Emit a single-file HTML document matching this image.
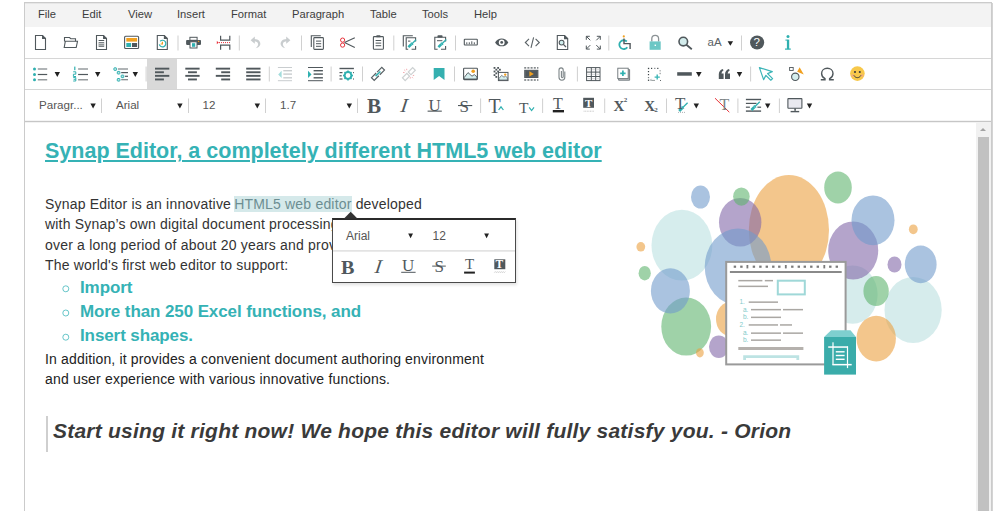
<!DOCTYPE html>
<html><head><meta charset="utf-8">
<style>
html,body{margin:0;padding:0;background:#fff;width:1000px;height:511px;overflow:hidden;}
body{position:relative;font-family:"Liberation Sans",sans-serif;color:#333;}
.abs{position:absolute;}
#frame{position:absolute;left:24px;top:2px;width:966px;height:520px;border:1px solid #cbcbcb;}
#menubar{position:absolute;left:25px;top:3px;width:966px;height:24px;background:#f3f3f3;}
.hl{position:absolute;left:25px;width:966px;height:1px;background:#d6d6d6;}
.mi{position:absolute;top:8.3px;font-size:11.2px;color:#3d3d3d;white-space:nowrap;}
.dd{position:absolute;font-size:11.6px;color:#555;white-space:nowrap;}
.txt{position:absolute;white-space:nowrap;}
</style></head>
<body>
<div id="frame"></div>
<div id="menubar"></div>
<div class="abs" style="left:992px;top:3px;width:1px;height:508px;background:#d4d4d4"></div>
<div class="abs" style="left:25px;top:3px;width:966px;height:1px;background:#e6e6e6"></div>
<div class="hl" style="top:58px"></div>
<div class="hl" style="top:89px"></div>
<div class="hl" style="top:121px;background:#c6c6c6"></div><div class="hl" style="top:120px;background:#f4f4f4"></div><div class="hl" style="top:122px;background:#f2f2f2;width:951px"></div>

<!-- menu -->
<div class="mi" style="left:38px">File</div>
<div class="mi" style="left:82px">Edit</div>
<div class="mi" style="left:128px">View</div>
<div class="mi" style="left:177px">Insert</div>
<div class="mi" style="left:231px">Format</div>
<div class="mi" style="left:292px">Paragraph</div>
<div class="mi" style="left:370px">Table</div>
<div class="mi" style="left:422px">Tools</div>
<div class="mi" style="left:474px">Help</div>

<svg class="abs" style="left:0;top:0" width="1000" height="122" viewBox="0 0 1000 122">
<g fill="none" stroke="#50585c" stroke-width="1.1">
 <!-- new doc -->
 <path d="M35.5 35.5H42.6L45.5 38.4V49.5H35.5Z"/>
 <path d="M42.6 35.5V38.4H45.5" fill="#50585c"/>
 <!-- folder -->
 <path d="M64.5 41.5V37.5H69.5L70.8 38.7H75.5V41.3"/>
 <path d="M64.2 47.5L65.3 41.3H77.5L76.2 47.5Z"/>
 <!-- doc lines -->
 <path d="M96.5 35.5H103.6L106.5 38.4V49.5H96.5Z"/>
 <path d="M103.6 35.5V38.4H106.5" fill="#50585c"/>
</g>
<g fill="#50585c">
 <rect x="98.6" y="40" width="5.6" height="1"/>
 <rect x="98.6" y="42" width="5.6" height="5" fill="#7a8083"/>
 <rect x="98.6" y="43.2" width="5.6" height="0.6" fill="#fff"/>
 <rect x="98.6" y="44.8" width="5.6" height="0.6" fill="#fff"/>
</g>
<!-- template -->
<rect x="124.6" y="36.3" width="14" height="12.2" rx="1" fill="#fff" stroke="#50585c" stroke-width="1.1"/>
<rect x="126.3" y="38" width="10.8" height="3.6" fill="#f1a01f"/>
<rect x="126.3" y="43" width="4.8" height="4" fill="#2fb0b0"/>
<rect x="132" y="43" width="5.1" height="4" fill="#50585c"/>
<!-- doc clock -->
<g fill="none" stroke="#50585c" stroke-width="1.1">
 <path d="M157.3 35.5H164.4L167.3 38.4V49.5H157.3Z"/>
 <path d="M164.4 35.5V38.4H167.3" fill="#50585c"/>
</g>
<path d="M160.2 41.2A3.3 3.3 0 1 1 159.3 44.3" fill="none" stroke="#2fb0b0" stroke-width="1.2"/>
<path d="M162.4 41.8V44H160.6" fill="none" stroke="#f1a01f" stroke-width="1.2"/>
<!-- separators -->
<g fill="#d0d0d0">
 <rect x="177.5" y="35.5" width="1" height="15"/>
 <rect x="238.8" y="35.5" width="1" height="15"/>
 <rect x="301" y="35.5" width="1" height="15"/>
 <rect x="393.3" y="35.5" width="1" height="15"/>
 <rect x="455" y="35.5" width="1" height="15"/>
 <rect x="608.3" y="35.5" width="1" height="15"/>
 <rect x="741" y="35.5" width="1" height="15"/>
</g>
<!-- printer -->
<rect x="189.9" y="37.3" width="7.2" height="3" fill="#fff" stroke="#50585c" stroke-width="1"/>
<rect x="186.1" y="40.1" width="14.9" height="4.8" rx="0.8" fill="#50585c"/>
<rect x="190" y="41.8" width="7" height="6.2" fill="#fff" stroke="#50585c" stroke-width="1"/>
<rect x="192" y="43.2" width="3.2" height="3.6" fill="#2fb0b0"/>
<circle cx="198.6" cy="41.4" r="0.7" fill="#f1a01f"/>
<!-- page break -->
<path d="M220.6 35.7V40.2H229.8V35.7" fill="none" stroke="#50585c" stroke-width="1.2"/>
<path d="M220.6 49.8V45.1H229.8V49.8" fill="none" stroke="#50585c" stroke-width="1.2"/>
<path d="M216.8 41L218.8 42.6L216.8 44.2Z" fill="#e8303a"/>
<path d="M219 42.6H230.3" stroke="#e8303a" stroke-width="1" stroke-dasharray="1 1"/>
<!-- undo redo -->
<path d="M254 39C258.6 38.8 260.8 41.8 260.3 44.6C259.9 46.6 258 47.9 255.6 48.2C257.4 46.8 258.3 45.4 258.1 44C257.9 42.3 256.4 41.3 254 41.3Z" fill="#c9cdcf"/>
<path d="M250.6 40.2L254.8 36.6V43.8Z" fill="#c9cdcf"/>
<path d="M 287 39 C 282.4 38.8 280.2 41.8 280.7 44.6 C 281.1 46.6 283 47.9 285.4 48.2 C 283.6 46.8 282.7 45.4 282.9 44 C 283.1 42.3 284.6 41.3 287 41.3 Z" fill="#c9cdcf"/>
<path d="M 290.4 40.2 L 286.2 36.6 V 43.8 Z" fill="#c9cdcf"/>
<!-- copy -->
<path d="M311.3 47V35.8H320.8" fill="none" stroke="#50585c" stroke-width="1.1"/>
<rect x="313.8" y="37.6" width="9.6" height="11.8" rx="0.8" fill="#fff" stroke="#50585c" stroke-width="1.1"/>
<g fill="#50585c"><rect x="316" y="40.6" width="5.2" height="1"/><rect x="316" y="43.2" width="5.2" height="1"/><rect x="316" y="45.8" width="5.2" height="1"/></g>
<!-- cut -->
<circle cx="342.6" cy="40.1" r="2.1" fill="none" stroke="#e8303a" stroke-width="1"/>
<circle cx="342.6" cy="45.1" r="2.1" fill="none" stroke="#e8303a" stroke-width="1"/>
<path d="M344.5 42.4L354.8 37.8M344.5 42.6L354.8 47.6" stroke="#50585c" stroke-width="1.1"/>
<!-- paste -->
<rect x="373.4" y="36.6" width="10" height="12.6" rx="0.8" fill="#fff" stroke="#50585c" stroke-width="1.1"/>
<rect x="376.3" y="35.3" width="4.2" height="2" rx="0.6" fill="#50585c"/>
<g fill="#50585c"><rect x="375.6" y="40" width="5.6" height="1"/><rect x="375.6" y="42.6" width="5.6" height="1"/><rect x="375.6" y="45.2" width="5.6" height="1"/></g>
<!-- copy format -->
<path d="M403.3 46.6V35.8H412.8" fill="none" stroke="#50585c" stroke-width="1.1"/>
<path d="M415.6 41.6V37.8H406.2V49.2H408.2M411.6 49.2H415.6V46" fill="none" stroke="#50585c" stroke-width="1.1"/>
<rect x="408" y="40.6" width="2.4" height="1" fill="#50585c"/>
<path d="M408.4 47.2L411.4 44.2" stroke="#2fb0b0" stroke-width="2.6"/>
<path d="M410.9 42.6L413.1 44.8" stroke="#2fb0b0" stroke-width="1.3"/>
<path d="M412 43.7L416 39.7" stroke="#2fb0b0" stroke-width="1.3"/>
<!-- paste format -->
<path d="M445.6 41.4V37.2H434.8V49.2H437.6M441 49.2H445.6V46" fill="none" stroke="#50585c" stroke-width="1.1"/>
<rect x="437.4" y="35.2" width="5.2" height="2.4" rx="1" fill="#50585c"/>
<rect x="437" y="40.2" width="5.4" height="1" fill="#50585c"/>
<path d="M438.4 47.2L441.4 44.2" stroke="#2fb0b0" stroke-width="2.6"/>
<path d="M440.9 42.6L443.1 44.8" stroke="#2fb0b0" stroke-width="1.3"/>
<path d="M442 43.7L446.2 39.5" stroke="#2fb0b0" stroke-width="1.3"/>
<!-- ruler -->
<rect x="464.3" y="39.2" width="13" height="5.8" rx="0.6" fill="none" stroke="#50585c" stroke-width="1.1"/>
<g fill="#50585c"><rect x="466.3" y="42.3" width="1" height="2"/><rect x="468.8" y="42.3" width="1" height="2"/><rect x="471.3" y="41.3" width="1" height="3"/><rect x="473.8" y="42.3" width="1" height="2"/></g>
<!-- eye -->
<path d="M495.1 42.4C498 37.2 505.4 37.2 508.3 42.4C505.4 47.6 498 47.6 495.1 42.4Z" fill="#50585c"/>
<circle cx="501.7" cy="42.4" r="2.9" fill="#fff"/>
<circle cx="501.7" cy="42.4" r="1.4" fill="#50585c"/>
<!-- code -->
<path d="M529 38.8L525.3 42.5L529 46.2M535.6 38.8L539.3 42.5L535.6 46.2M533.6 37.3L531 47.8" fill="none" stroke="#5a6266" stroke-width="1.1"/>
<!-- preview -->
<g fill="none" stroke="#50585c" stroke-width="1.1">
 <path d="M557.3 35.5H564.6L567.7 38.6V49.5H557.3Z"/>
 <path d="M564.6 35.5V38.6H567.7" fill="#50585c"/>
</g>
<circle cx="561.6" cy="42.6" r="2.4" fill="#cfeeee" stroke="#50585c" stroke-width="1.1"/>
<path d="M563.4 44.4L566 47" stroke="#50585c" stroke-width="1.3"/>
</svg>

<svg class="abs" style="left:0;top:0" width="1000" height="122" viewBox="0 0 1000 122">
<!-- fullscreen -->
<g fill="none" stroke="#50585c" stroke-width="1">
 <path d="M586.3 39.8V36.3H589.8M586.3 36.3L590.3 40.3"/>
 <path d="M600.3 39.8V36.3H596.8M600.3 36.3L596.3 40.3"/>
 <path d="M586.3 45.6V49.1H589.8M586.3 49.1L590.3 45.1"/>
 <path d="M600.3 45.6V49.1H596.8M600.3 49.1L596.3 45.1"/>
</g>
<!-- accessibility -->
<circle cx="623.8" cy="36.4" r="1.1" fill="#f1a01f"/>
<path d="M626.8 41.5A4.4 4.4 0 1 0 627.3 47.2" fill="none" stroke="#2fb0b0" stroke-width="1.8"/>
<path d="M624 38.6V43.6H630.1V49" fill="none" stroke="#50585c" stroke-width="1.4"/>
<!-- lock -->
<path d="M651.8 41.6V38.8A3.4 3.4 0 0 1 658.6 38.8V41.6" fill="none" stroke="#8b9295" stroke-width="1.3"/>
<rect x="649.6" y="41.4" width="11.1" height="8.4" fill="#6cc7c5"/>
<rect x="654.6" y="44.6" width="1.4" height="1.4" fill="#fff"/>
<!-- search -->
<circle cx="683.3" cy="41.6" r="4.3" fill="#d3ecec" stroke="#50585c" stroke-width="1.6"/>
<path d="M686.4 44.8L691.8 49.2" stroke="#50585c" stroke-width="1.8"/>
<!-- help -->
<circle cx="757.1" cy="42.5" r="7.1" fill="#50585c"/>
<!-- triangles -->
<path d="M727.6 41.2H733.1L730.35 45.8Z" fill="#222"/>
<!-- info i -->
<g fill="#2fb0b0">
<circle cx="788" cy="36.6" r="1.5"/>
<rect x="786.9" y="39.6" width="2.3" height="9.6"/>
<rect x="785" y="48.5" width="5.8" height="1.2"/>
<rect x="785.4" y="39.6" width="2" height="1"/>
</g>
</svg>

<svg class="abs" style="left:0;top:0" width="1000" height="122" viewBox="0 0 1000 122">
<!-- active align bg -->
<rect x="147" y="59" width="30" height="30" fill="#d9d9d9"/>
<!-- separators -->
<g fill="#d0d0d0">
 <rect x="145.6" y="66.5" width="1" height="15"/>
 <rect x="268.8" y="66.5" width="1" height="15"/>
 <rect x="330.6" y="66.5" width="1" height="15"/>
 <rect x="362" y="66.5" width="1" height="15"/>
 <rect x="454" y="66.5" width="1" height="15"/>
 <rect x="576.9" y="66.5" width="1" height="15"/>
 <rect x="750.1" y="66.5" width="1" height="15"/>
</g>
<!-- bullet list -->
<g fill="#2fb0b0"><circle cx="34.5" cy="69" r="1.5"/><circle cx="34.5" cy="74.5" r="1.5"/><circle cx="34.5" cy="79.8" r="1.5"/></g>
<g fill="#50585c"><rect x="37.8" y="68.4" width="9.4" height="1.2" fill="#7d8386"/><rect x="37.8" y="73.9" width="9.4" height="1.2"/><rect x="37.8" y="79.2" width="9.4" height="1.2" fill="#7d8386"/></g>
<!-- number list -->
<g fill="#2fb0b0">
 <rect x="74.2" y="66.6" width="1.2" height="3.6"/>
 <path d="M73.2 71.8H75.8V74.2H73.4V76.5H76" fill="none" stroke="#2fb0b0" stroke-width="1"/>
 <path d="M73.2 77.6H75.8V81H73.2M73.6 79.3H75.8" fill="none" stroke="#2fb0b0" stroke-width="1"/>
</g>
<g fill="#50585c"><rect x="78.1" y="68.4" width="9.9" height="1.2" fill="#7d8386"/><rect x="78.1" y="73.9" width="9.9" height="1.2"/><rect x="78.1" y="79.2" width="9.9" height="1.2" fill="#7d8386"/></g>
<!-- multilevel -->
<g fill="#bfe6e6" stroke="#2fb0b0" stroke-width="1">
 <rect x="113.9" y="67.8" width="2.6" height="2.6" rx="0.6"/>
 <rect x="117.3" y="71.4" width="2.6" height="2.6" rx="0.6"/>
 <rect x="121.2" y="75.1" width="2.6" height="2.6" rx="0.6"/>
 <rect x="117.3" y="78.5" width="2.6" height="2.6" rx="0.6"/>
</g>
<g fill="#50585c"><rect x="117.9" y="68.4" width="10.1" height="1.2" fill="#7d8386"/><rect x="121.2" y="72" width="6.8" height="1.2"/><rect x="125" y="75.7" width="3" height="1.2"/><rect x="121.2" y="79.1" width="6.8" height="1.2" fill="#7d8386"/></g>
<!-- triangles row2 -->
<g fill="#222">
 <path d="M54.6 72.1H60L57.3 76.9Z"/>
 <path d="M95 72.1H100.4L97.7 76.9Z"/>
 <path d="M132.6 72.1H138L135.3 76.9Z"/>
 <path d="M696 72.1H701.6L698.8 76.9Z"/>
 <path d="M736.8 72.1H742.2L739.5 76.9Z"/>
</g>
<!-- align -->
<g fill="#50585c">
 <rect x="155" y="67.7" width="14.3" height="1.9"/><rect x="155" y="71.3" width="8.9" height="1.9"/><rect x="155" y="74.9" width="14.3" height="1.9"/><rect x="155" y="78.5" width="8.9" height="1.9"/>
 <rect x="185.3" y="67.7" width="14.3" height="1.9"/><rect x="188" y="71.3" width="8.9" height="1.9"/><rect x="185.3" y="74.9" width="14.3" height="1.9"/><rect x="188" y="78.5" width="8.9" height="1.9"/>
 <rect x="215.8" y="67.7" width="14.3" height="1.9"/><rect x="221.2" y="71.3" width="8.9" height="1.9"/><rect x="215.8" y="74.9" width="14.3" height="1.9"/><rect x="221.2" y="78.5" width="8.9" height="1.9"/>
 <rect x="246.2" y="67.7" width="14.3" height="1.9"/><rect x="246.2" y="71.3" width="14.3" height="1.9"/><rect x="246.2" y="74.9" width="14.3" height="1.9"/><rect x="246.2" y="78.5" width="14.3" height="1.9"/>
</g>
<!-- outdent -->
<g fill="#c9cdcf">
 <rect x="277.9" y="67" width="14.1" height="1"/><rect x="283.3" y="70" width="8.7" height="1.4"/><rect x="283.3" y="73.4" width="8.7" height="1.4"/><rect x="283.3" y="77.1" width="8.7" height="1.4"/><rect x="277.9" y="80.2" width="14.1" height="1"/>
</g>
<path d="M281.6 70.8V78L278.2 74.4Z" fill="#a3dcdc"/>
<!-- indent -->
<g fill="#50585c">
 <rect x="308" y="67" width="14.9" height="1"/><rect x="313.6" y="70" width="9.3" height="1.4"/><rect x="313.6" y="73.4" width="9.3" height="1.4"/><rect x="313.6" y="77.1" width="9.3" height="1.4"/><rect x="308" y="80.2" width="14.9" height="1"/>
</g>
<path d="M308 70.8V78L311.5 74.4Z" fill="#2fb0b0"/>
<!-- paragraph gear -->
<g fill="#50585c">
 <rect x="339.5" y="67.8" width="14.4" height="1.4"/>
 <rect x="339.5" y="72" width="3" height="1.2"/><rect x="339.5" y="75.2" width="2.2" height="1.2"/><rect x="339.5" y="78.4" width="3" height="1.2"/>
 <rect x="353" y="72" width="0.9" height="1.2"/><rect x="353" y="78.4" width="0.9" height="1.2"/>
</g>
<g transform="translate(348 75.5)">
 <circle r="3.4" fill="none" stroke="#2fb0b0" stroke-width="2"/>
 <g stroke="#2fb0b0" stroke-width="1.6">
  <path d="M0 -5V-3M0 3V5M-5 0H-3M3 0H5M-3.5 -3.5L-2.2 -2.2M2.2 2.2L3.5 3.5M-3.5 3.5L-2.2 2.2M2.2 -2.2L3.5 -3.5"/>
 </g>
</g>
<!-- link -->
<g fill="none" stroke="#586064" stroke-width="1.2">
 <path d="M3.3 -1.9H-3.3V1.9H3.3" transform="translate(375.2 76.7) rotate(-45)"/>
 <path d="M-3.3 -1.9H3.3V1.9H-3.3" transform="translate(380.8 71.1) rotate(-45)"/>
</g>
<path d="M375.6 76.1L380.4 71.5" stroke="#2fb0b0" stroke-width="1.5"/>
<!-- unlink -->
<g fill="none" stroke="#cdd1d2" stroke-width="1.2">
 <path d="M3.1 -1.9H-3.1V1.9H3.1Z" transform="translate(406 77) rotate(-45)"/>
 <path d="M-3.1 -1.9H3.1V1.9H-3.1Z" transform="translate(411.8 71.2) rotate(-45)"/>
</g>
<g stroke="#f2a3a8" stroke-width="0.9">
 <path d="M403 72.4L404.6 72.6M404.2 69.8L405.4 70.9M406.6 68.8L406.8 70.2"/>
 <path d="M414.2 75.3L412.8 75.6M413 78.2L412 77.2M410.2 78.6L410.4 77.2"/>
</g>
<!-- bookmark -->
<path d="M433.7 68H444.5V79.9L439.1 76L433.7 79.9Z" fill="#35b0b0"/>
<!-- image -->
<rect x="463.6" y="68.3" width="13.8" height="11.3" rx="0.6" fill="#fff" stroke="#50585c" stroke-width="1.1"/>
<path d="M464.2 77.5L468 72.6L472 76.2L474.3 74.6L476.9 76.8V79H464.2Z" fill="#d5eeee" stroke="#50585c" stroke-width="0.9"/>
<circle cx="473.2" cy="71.3" r="1.8" fill="#f1a01f"/>
<!-- bg image -->
<g fill="#50585c">
 <rect x="493.6" y="67" width="1.8" height="1.8"/><rect x="497.2" y="67" width="1.8" height="1.8"/>
 <rect x="495.4" y="68.8" width="1.8" height="1.8"/><rect x="499" y="68.8" width="1.8" height="1.8"/>
 <rect x="493.6" y="70.6" width="1.8" height="1.8"/><rect x="497.2" y="70.6" width="1.8" height="1.8"/>
 <rect x="495.4" y="72.4" width="1.8" height="1.8"/>
 <rect x="493.6" y="74.2" width="1.8" height="1.8"/>
 <rect x="495.4" y="76" width="1.8" height="1.8"/>
</g>
<rect x="498.4" y="72.4" width="9.6" height="8.2" fill="#fff" stroke="#50585c" stroke-width="1"/>
<path d="M499 78.4L501.6 75.4L504 77.2L505.4 76.2L507.4 77.6V80H499Z" fill="#d5eeee" stroke="#50585c" stroke-width="0.7"/>
<circle cx="505.2" cy="74.6" r="1.2" fill="#f1a01f"/>
<!-- video -->
<rect x="524.2" y="69.8" width="14.2" height="8.2" fill="#50585c"/>
<g fill="#50585c">
 <rect x="524.2" y="67.3" width="2" height="1.2"/><rect x="527.4" y="67.3" width="2" height="1.2"/><rect x="530.6" y="67.3" width="2" height="1.2"/><rect x="533.8" y="67.3" width="2" height="1.2"/><rect x="537" y="67.3" width="1.4" height="1.2"/>
 <rect x="524.2" y="79.4" width="2" height="1.2"/><rect x="527.4" y="79.4" width="2" height="1.2"/><rect x="530.6" y="79.4" width="2" height="1.2"/><rect x="533.8" y="79.4" width="2" height="1.2"/><rect x="537" y="79.4" width="1.4" height="1.2"/>
</g>
<rect x="525.3" y="70.9" width="12" height="6" fill="none" stroke="#6e7578" stroke-width="0.4"/>
<path d="M529.4 71.2L533.8 73.9L529.4 76.6Z" fill="#f1a01f"/>
<!-- attach -->
<path d="M564.8 71.5V77.3A2.9 2.9 0 0 1 559 77.3V70A2.1 2.1 0 0 1 563.2 70V76.8A0.9 0.9 0 0 1 561.4 76.8V71" fill="none" stroke="#7d8588" stroke-width="1.1"/>
<!-- table -->
<rect x="586.6" y="67.6" width="13.4" height="13" fill="none" stroke="#50585c" stroke-width="1"/>
<g fill="#50585c">
 <rect x="586.6" y="71.6" width="13.4" height="1"/><rect x="586.6" y="76" width="13.4" height="1"/>
 <rect x="590.8" y="67.6" width="1" height="13"/><rect x="595.2" y="67.6" width="1" height="13"/>
</g>
<g fill="#d6d8d9">
 <rect x="587.6" y="69.2" width="3" height="1"/><rect x="592" y="69.2" width="3" height="1"/><rect x="596.4" y="69.2" width="3" height="1"/>
 <rect x="587.6" y="73.8" width="3" height="1"/><rect x="592" y="73.8" width="3" height="1"/><rect x="596.4" y="73.8" width="3" height="1"/>
 <rect x="587.6" y="78.2" width="3" height="1"/><rect x="592" y="78.2" width="3" height="1"/><rect x="596.4" y="78.2" width="3" height="1"/>
</g>
<!-- insert div -->
<path d="M628.2 69.6H629.6V80.2H618.6V78.8" fill="#c4c7c9" stroke="#6a7276" stroke-width="0.9"/>
<rect x="617.8" y="68.2" width="10.4" height="10.4" fill="#fff" stroke="#6a7276" stroke-width="0.9"/>
<path d="M622.9 70.6V76M620.2 73.3H625.6" stroke="#2fb0b0" stroke-width="1.7"/>
<!-- layer -->
<g fill="#3e4649">
 <rect x="647.9" y="67.8" width="1.3" height="1.3"/><rect x="651" y="67.8" width="1.2" height="1.2"/><rect x="654.2" y="67.8" width="1.2" height="1.2" fill="#7a8184"/><rect x="657.2" y="67.8" width="1.2" height="1.2"/>
 <rect x="647.9" y="71" width="1.2" height="1.2"/><rect x="647.9" y="74" width="1.2" height="1.2"/><rect x="647.9" y="77" width="1.2" height="1.2" fill="#7a8184"/><rect x="647.9" y="79.6" width="1.3" height="1.3"/>
 <rect x="659.6" y="70.2" width="1" height="1.2" fill="#7a8184"/><rect x="659.6" y="72.8" width="1" height="1.4" fill="#7a8184"/>
</g>
<path d="M650 80.4L651.4 79.4M651.2 80.4H655" stroke="#7a8184" stroke-width="0.8"/>
<path d="M657.2 74.6V79.6M654.6 77.1H659.8" stroke="#3ab5b5" stroke-width="1.4"/>
<rect x="660" y="80" width="0.9" height="0.9" fill="#3e4649"/>
<!-- hr -->
<rect x="677.2" y="72.2" width="14.6" height="3.5" fill="#50585c"/>
<!-- quote -->
<path d="M718.8 79V74.2C718.8 71.8 720.4 69.8 722.6 69L723.6 70.2C722.3 71 721.6 72.2 721.5 73.6H723.6V79Z" fill="#50585c"/>
<path d="M725 79V74.2C725 71.8 726.6 69.8 728.8 69L729.8 70.2C728.5 71 727.8 72.2 727.7 73.6H730V79Z" fill="#50585c"/>
<!-- select arrow -->
<path d="M759.4 67.6L772.3 71.6L767.6 73.6L772.6 78.6L770.8 80.2L765.9 75.4L763.6 79.6Z" fill="none" stroke="#3cb5b8" stroke-width="1.2" stroke-linejoin="round"/>
<!-- shapes -->
<rect x="789.6" y="67.5" width="3.6" height="3" fill="#fff" stroke="#50585c" stroke-width="0.9"/>
<path d="M797.2 71.8L799.6 67.2L803.8 74.6Z" fill="#f1a01f"/>
<circle cx="795.3" cy="76.8" r="3.7" fill="#d5eeee" stroke="#50585c" stroke-width="1.1"/>
<!-- omega -->
<path d="M820.8 79.8H825V78.6C822.7 77.4 821.6 75.6 821.6 73.4C821.6 70.3 824.1 68.3 827.3 68.3C830.5 68.3 833 70.3 833 73.4C833 75.6 831.9 77.4 829.6 78.6V79.8H833.8" fill="none" stroke="#50585c" stroke-width="1.4"/>
<!-- emoji -->
<circle cx="857.4" cy="73.6" r="7.3" fill="#f7c84a"/>
<circle cx="852.7" cy="75.6" r="1.3" fill="#f3a58c" opacity="0.75"/>
<circle cx="862.1" cy="75.6" r="1.3" fill="#f3a58c" opacity="0.75"/>
<circle cx="855" cy="72" r="1.05" fill="#3a3a3a"/>
<circle cx="859.8" cy="72" r="1.05" fill="#3a3a3a"/>
<path d="M853.9 75.4C855.6 78.4 859.2 78.4 860.9 75.4" fill="none" stroke="#3a3a3a" stroke-width="1"/>
</svg>

<svg class="abs" style="left:0;top:0" width="1000" height="122" viewBox="0 0 1000 122">
<g fill="#d0d0d0">
 <rect x="101" y="98.5" width="1" height="14.5"/>
 <rect x="188" y="98.5" width="1" height="14.5"/>
 <rect x="265" y="98.5" width="1" height="14.5"/>
 <rect x="357" y="98.5" width="1" height="14.5"/>
 <rect x="480.1" y="98.5" width="1" height="14.5"/>
 <rect x="542.1" y="98.5" width="1" height="14.5"/>
 <rect x="604.2" y="98.5" width="1" height="14.5"/>
 <rect x="666" y="98.5" width="1" height="14.5"/>
 <rect x="737.4" y="98.5" width="1" height="14.5"/>
 <rect x="778.9" y="98.5" width="1" height="14.5"/>
</g>
<g fill="#222">
 <path d="M90.4 103.6H95.8L93.1 108.4Z"/>
 <path d="M177.2 103.6H182.6L179.9 108.4Z"/>
 <path d="M254.6 103.6H260L257.3 108.4Z"/>
 <path d="M346.6 103.6H352L349.3 108.4Z"/>
 <path d="M693.6 103.6H699L696.3 108.4Z"/>
 <path d="M765 103.6H770.4L767.7 108.4Z"/>
 <path d="M806.8 103.6H812.2L809.5 108.4Z"/>
</g>
<!-- underline -->
<rect x="427.6" y="110.6" width="14.2" height="1.1" fill="#50585c"/>
<!-- strike -->
<rect x="458" y="105" width="14.2" height="1.1" fill="#50585c"/>
<!-- caret up / down -->
<path d="M498.6 110L501 106.8L503.4 110" fill="none" stroke="#2fb0b0" stroke-width="1.2"/>
<path d="M529.2 107.4L531.6 110.6L534 107.4" fill="none" stroke="#2fb0b0" stroke-width="1.2"/>
<!-- font color bar -->
<rect x="552.8" y="110" width="11.2" height="2.4" fill="#222"/>
<!-- bg color box -->
<rect x="583.2" y="97.8" width="10.8" height="10" fill="#50585c"/>
<path d="M583.6 111.2H594" stroke="#c8c8c8" stroke-width="1" stroke-dasharray="1 0.6"/>
<!-- format brush -->
<path d="M679.2 111L682.2 108" stroke="#2fb0b0" stroke-width="2.6"/>
<path d="M681.7 106.4L683.9 108.6" stroke="#2fb0b0" stroke-width="1.3"/>
<path d="M682.8 107.5L687.6 102.7" stroke="#2fb0b0" stroke-width="1.3"/>
<path d="M678 112.4H685.6" stroke="#9aa0a3" stroke-width="0.8" stroke-dasharray="1 1"/>
<!-- clear format red line -->
<path d="M715 98.2L729.3 112.2" stroke="#e8303a" stroke-width="1"/>
<!-- lines brush -->
<g fill="#50585c">
 <rect x="745.9" y="98.8" width="15.2" height="1.4"/>
 <rect x="745.9" y="102.8" width="10.6" height="1.2"/>
 <rect x="745.9" y="106.6" width="4" height="1.2"/>
 <rect x="757.4" y="106.6" width="3.7" height="1.2"/>
 <rect x="745.9" y="110.4" width="15.2" height="1.4"/>
</g>
<path d="M751.4 110L754.4 107" stroke="#2fb0b0" stroke-width="2.6"/>
<path d="M753.9 105.4L756.1 107.6" stroke="#2fb0b0" stroke-width="1.3"/>
<path d="M755 106.5L759.8 101.7" stroke="#2fb0b0" stroke-width="1.3"/>
<!-- monitor -->
<rect x="787.9" y="98.6" width="14" height="9.6" rx="0.5" fill="#e9e9ef" stroke="#50585c" stroke-width="1.1"/>
<rect x="794.3" y="108.4" width="1.6" height="2.4" fill="#50585c"/>
<rect x="790.6" y="110.9" width="8.6" height="1.4" fill="#50585c"/>
</svg>


<!-- row1 text -->
<div class="txt" style="left:707.5px;top:36px;font-size:11.5px;color:#5a6266">aA</div>
<div class="txt" style="left:753.5px;top:36px;font-size:11.5px;color:#fff">?</div>



<!-- row3 text -->
<div class="dd" style="left:39px;top:97.5px">Paragr...</div>
<div class="dd" style="left:116px;top:97.5px">Arial</div>
<div class="dd" style="left:202.5px;top:97.5px">12</div>
<div class="dd" style="left:280px;top:97.5px">1.7</div>
<div class="txt" style="left:367px;top:94.5px;font-size:20px;font-weight:bold;font-family:'Liberation Serif',serif;color:#50585c;transform:scaleX(1.06);transform-origin:0 0">B</div>
<div class="txt" style="left:400.5px;top:94px;font-size:20px;font-style:italic;font-family:'Liberation Serif',serif;color:#50585c;transform:skewX(-8deg)">I</div>
<div class="txt" style="left:428.5px;top:96px;font-size:17px;font-family:'Liberation Serif',serif;color:#50585c">U</div>
<div class="txt" style="left:459.5px;top:96.5px;font-size:17px;font-family:'Liberation Serif',serif;color:#50585c">S</div>
<div class="txt" style="left:488.5px;top:94.5px;font-size:20px;font-family:'Liberation Serif',serif;color:#50585c">T</div>
<div class="txt" style="left:519px;top:99px;font-size:15.5px;font-family:'Liberation Serif',serif;color:#50585c">T</div>
<div class="txt" style="left:553px;top:94.5px;font-size:16px;font-family:'Liberation Serif',serif;color:#50585c">T</div>
<div class="txt" style="left:585px;top:97px;font-size:11px;font-weight:bold;font-family:'Liberation Serif',serif;color:#fff">T</div>
<div class="txt" style="left:613.5px;top:98px;font-size:15px;font-weight:bold;font-family:'Liberation Serif',serif;color:#50585c">X</div>
<div class="txt" style="left:623.8px;top:96px;font-size:7px;font-weight:bold;font-family:'Liberation Serif',serif;color:#50585c">2</div>
<div class="txt" style="left:644.2px;top:98px;font-size:15px;font-weight:bold;font-family:'Liberation Serif',serif;color:#50585c">X</div>
<div class="txt" style="left:654.2px;top:106px;font-size:7px;font-weight:bold;font-family:'Liberation Serif',serif;color:#50585c">2</div>
<div class="txt" style="left:675px;top:94px;font-size:17px;font-family:'Liberation Serif',serif;color:#50585c">T</div>
<div class="txt" style="left:719.5px;top:96px;font-size:16px;font-family:'Liberation Serif',serif;color:#7d8588">T</div>

<div id="content" style="position:absolute;left:0;top:0;">
<div class="txt" style="left:45px;top:139px;font-size:21.5px;font-weight:bold;color:#35b2b5;text-decoration:underline;text-decoration-thickness:2px;text-underline-offset:2px">Synap Editor, a completely different HTML5 web editor</div>
<div class="txt" style="left:45px;top:195.5px;font-size:14px;color:#333;letter-spacing:0.19px">Synap Editor is an innovative <span style="background:#d5e9ea;color:#6c8e92;margin-left:-1.5px;padding-left:0.5px;padding-right:0">HTML5 web editor</span> developed</div>
<div class="txt" style="left:45px;top:216px;font-size:14px;color:#333;letter-spacing:0.19px">with Synap’s own digital document processing technology</div>
<div class="txt" style="left:45px;top:236.5px;font-size:14px;color:#333;letter-spacing:0.19px">over a long period of about 20 years and proven by many</div>
<div class="txt" style="left:45px;top:257px;font-size:14px;color:#333;letter-spacing:0.18px">The world's first web editor to support:</div>
<div class="txt" style="left:80px;top:278px;font-size:17px;font-weight:bold;color:#35b2b5;letter-spacing:-0.1px">Import</div>
<div class="txt" style="left:80px;top:302px;font-size:17px;font-weight:bold;color:#35b2b5;letter-spacing:-0.1px">More than 250 Excel functions, and</div>
<div class="txt" style="left:80px;top:326px;font-size:17px;font-weight:bold;color:#35b2b5;letter-spacing:-0.1px">Insert shapes.</div>
<div class="txt" style="left:45px;top:351px;font-size:14px;color:#222;letter-spacing:0.16px">In addition, it provides a convenient document authoring environment</div>
<div class="txt" style="left:45px;top:371px;font-size:14px;color:#222;letter-spacing:0.18px">and user experience with various innovative functions.</div>
<div class="abs" style="left:45.5px;top:415.5px;width:2.5px;height:36px;background:#cfcfcf"></div>
<div class="txt" style="left:53px;top:418.5px;font-size:21px;font-weight:bold;font-style:italic;color:#3a3a3a;letter-spacing:0.23px">Start using it right now! We hope this editor will fully satisfy you. - Orion</div>
</div>
<svg class="abs" style="left:0;top:0" width="1000" height="511" viewBox="0 0 1000 511">
<g fill="none" stroke="#4dbcbf" stroke-width="0.85">
<circle cx="65.8" cy="288.8" r="3"/>
<circle cx="65.8" cy="313" r="3"/>
<circle cx="65.8" cy="337.2" r="3"/>
</g>
</svg>
<!-- popup -->
<div class="abs" style="left:331.5px;top:218.2px;width:182.5px;height:62.3px;background:#fff;border:1.5px solid #4a4a4a;border-top:2px solid #2a2a2a;box-shadow:1px 2px 3px rgba(0,0,0,0.12)"></div>
<svg class="abs" style="left:0;top:0" width="1000" height="511" viewBox="0 0 1000 511">
<path d="M344 218.6L350.7 211.8L357.4 218.6Z" fill="#333"/>
<rect x="333" y="250.2" width="182" height="1.4" fill="#dcdcdc"/>
<path d="M408.2 233.6H413L410.6 238.3Z" fill="#222"/>
<path d="M484.2 233.6H489L486.6 238.3Z" fill="#222"/>
<rect x="401.2" y="271.8" width="14.4" height="1" fill="#50585c"/>
<rect x="432.2" y="265.6" width="13.6" height="1" fill="#50585c"/>
<rect x="464.1" y="271.6" width="10.8" height="2" fill="#222"/>
<rect x="494.3" y="259.3" width="11" height="9.9" fill="#50585c"/>
<path d="M494.3 272.6L495.3 271.6L496.3 272.6L497.3 271.6L498.3 272.6L499.3 271.6L500.3 272.6L501.3 271.6L502.3 272.6L503.3 271.6L504.3 272.6L505.3 271.6" fill="none" stroke="#c4c4c4" stroke-width="0.8"/>
</svg>
<div class="dd" style="left:346px;top:228.5px;font-size:12px">Arial</div>
<div class="dd" style="left:432.5px;top:228.5px;font-size:12px">12</div>
<div class="txt" style="left:340.8px;top:256.5px;font-size:19px;font-weight:bold;font-family:'Liberation Serif',serif;color:#50585c;transform:scaleX(1.06);transform-origin:0 0">B</div>
<div class="txt" style="left:374.5px;top:255.5px;font-size:19.5px;font-style:italic;font-family:'Liberation Serif',serif;color:#50585c;transform:skewX(-8deg)">I</div>
<div class="txt" style="left:402px;top:255.5px;font-size:17px;font-family:'Liberation Serif',serif;color:#50585c">U</div>
<div class="txt" style="left:434.5px;top:256.5px;font-size:17px;font-family:'Liberation Serif',serif;color:#50585c">S</div>
<div class="txt" style="left:465px;top:256px;font-size:15px;font-family:'Liberation Serif',serif;color:#50585c">T</div>
<div class="txt" style="left:495.5px;top:257.5px;font-size:11.5px;font-weight:bold;font-family:'Liberation Serif',serif;color:#fff">T</div>

<svg class="abs" style="left:0;top:0" width="1000" height="511" viewBox="0 0 1000 511">
<g opacity="0.6">
 <!-- light teal -->
 <ellipse cx="681.9" cy="245.2" rx="30.4" ry="35.4" fill="#bbe1e1"/>
 <ellipse cx="913.1" cy="310" rx="28.6" ry="33" fill="#bbe1e1"/>
 <ellipse cx="852.6" cy="294.6" rx="25" ry="29.2" fill="#bbe1e1"/>
</g>
<g opacity="0.6"><ellipse cx="788.9" cy="230" rx="40.1" ry="55" fill="#eba03f"/></g>
<g opacity="0.6"><ellipse cx="731" cy="319" rx="15" ry="17.3" fill="#eba03f"/></g>
<g opacity="0.6"><ellipse cx="876.2" cy="338.6" rx="19.7" ry="22.9" fill="#eba03f"/></g>
<g opacity="0.6"><ellipse cx="640.8" cy="246.8" rx="4.4" ry="4.8" fill="#eba03f"/></g>
<g opacity="0.6"><ellipse cx="913.3" cy="229.3" rx="4.4" ry="4.9" fill="#eba03f"/></g>
<g opacity="0.6"><ellipse cx="740.2" cy="222.3" rx="21.2" ry="24.3" fill="#8267a8"/></g>
<g opacity="0.6"><ellipse cx="741.4" cy="196.6" rx="8.3" ry="9.2" fill="#5fb46e"/></g>
<g opacity="0.6"><ellipse cx="853.2" cy="250.4" rx="25" ry="29" fill="#8267a8"/></g>
<g opacity="0.6"><ellipse cx="894.5" cy="264.5" rx="7" ry="8" fill="#8267a8"/></g>
<g opacity="0.6"><ellipse cx="718.8" cy="346.7" rx="9.8" ry="11.3" fill="#8267a8"/></g>
<g opacity="0.6"><ellipse cx="838" cy="187.4" rx="13.8" ry="16" fill="#5fb46e"/></g>
<g opacity="0.6"><ellipse cx="876.1" cy="291.1" rx="12.7" ry="15" fill="#5fb46e"/></g>
<g opacity="0.6"><ellipse cx="644.7" cy="273.2" rx="6.1" ry="7.3" fill="#5fb46e"/></g>
<g opacity="0.6"><ellipse cx="686.2" cy="326.6" rx="24.9" ry="29" fill="#5fb46e"/></g>
<g opacity="0.6"><ellipse cx="699.9" cy="352.8" rx="3.9" ry="4.6" fill="#eba03f"/></g>
<g opacity="0.6"><ellipse cx="700.5" cy="197" rx="9.5" ry="11.5" fill="#719bcb"/></g>
<g opacity="0.6"><ellipse cx="738" cy="266.8" rx="33.3" ry="38.3" fill="#719bcb"/></g>
<g opacity="0.6"><ellipse cx="873" cy="220.3" rx="21.5" ry="24.9" fill="#719bcb"/></g>
<g opacity="0.6"><ellipse cx="920.7" cy="264.4" rx="15.9" ry="18.8" fill="#719bcb"/></g>
<g opacity="0.6"><ellipse cx="670.4" cy="290.9" rx="19.5" ry="22.6" fill="#719bcb"/></g>
<!-- document -->
<rect x="726.2" y="261.9" width="119.4" height="102.5" fill="#fff" stroke="#9a9a9a" stroke-width="2"/>
<g fill="#7a7a7a"><rect x="733.7" y="265.6" width="2.4" height="2.2"/><rect x="740.2" y="265.6" width="2.4" height="2.2"/><rect x="746.5" y="265" width="1.8" height="3.4"/><rect x="752.7" y="265.6" width="2.4" height="2.2"/><rect x="759.2" y="265.6" width="2.4" height="2.2"/><rect x="765.6" y="265.6" width="2.4" height="2.2"/><rect x="772.1" y="265.6" width="2.4" height="2.2"/><rect x="778.1" y="265.6" width="2.4" height="2.2"/><rect x="784.9" y="265" width="1.8" height="3.4"/><rect x="791.1" y="265.6" width="2.4" height="2.2"/><rect x="797.6" y="265.6" width="2.4" height="2.2"/><rect x="803.6" y="265.6" width="2.4" height="2.2"/><rect x="810.1" y="265.6" width="2.4" height="2.2"/><rect x="816.6" y="265.6" width="2.4" height="2.2"/><rect x="823.4" y="265" width="1.8" height="3.4"/><rect x="829.1" y="265.6" width="2.4" height="2.2"/><rect x="835.6" y="265.6" width="2.4" height="2.2"/></g>
<rect x="729.9" y="271" width="111.8" height="2" fill="#8a8a8a"/>
<g fill="#aaa7a3">
 <rect x="738.3" y="279.9" width="24.1" height="1.5"/><rect x="764.8" y="279.9" width="8.2" height="1.5"/>
 <rect x="738.3" y="285.6" width="29.7" height="1.5"/>
 <rect x="748.7" y="301.4" width="29.3" height="1.5"/>
 <rect x="751" y="308.9" width="30" height="1.5"/><rect x="783" y="308.9" width="20" height="1.5"/>
 <rect x="751" y="316.6" width="30" height="1.5"/>
 <rect x="748.7" y="324.2" width="29.3" height="1.5"/><rect x="780" y="324.2" width="12" height="1.5"/>
 <rect x="751" y="332.4" width="30" height="1.5"/><rect x="783" y="332.4" width="20" height="1.5"/>
 <rect x="751" y="339.4" width="30" height="1.5"/>
</g>
<rect x="738.3" y="347" width="65.1" height="3" fill="#b5b1ad"/>
<rect x="777.8" y="280.7" width="27" height="13.7" fill="none" stroke="#9fd8d8" stroke-width="2"/>
<path d="M744.6 360V356.6H797.8V360" fill="none" stroke="#bde3e3" stroke-width="2.8"/>
<g font-family="Liberation Sans" font-size="6.5" fill="#7fcaca">
 <text x="739.5" y="304">1.</text><text x="743" y="311.5">a.</text><text x="743" y="319">b.</text>
 <text x="739.5" y="327">2.</text><text x="743" y="335">a.</text><text x="743" y="342">b.</text>
</g>
<!-- crop box -->
<path d="M831.1 330.3H850.5L856 337H824.1Z" fill="#7ecfcf"/>
<rect x="824.1" y="337" width="31.9" height="37.6" fill="#3aacaa"/>
<g fill="#fff">
 <rect x="832.4" y="342.3" width="1.2" height="22.6"/>
 <rect x="828.2" y="346.3" width="19.6" height="1.5"/>
 <rect x="846.9" y="346.3" width="1.2" height="21.8"/>
 <rect x="832.4" y="363.9" width="19.3" height="1.5"/>
 <rect x="835.8" y="351.1" width="8.8" height="1.4"/>
 <rect x="835.8" y="354.8" width="8.8" height="1.4"/>
 <rect x="835.8" y="358.6" width="8.8" height="1.4"/>
</g>
</svg>

<!-- scrollbar -->
<div class="abs" style="left:976px;top:122px;width:15px;height:389px;background:#f1f1f1"></div>
<div class="abs" style="left:978px;top:137px;width:11px;height:380px;background:#c1c1c1"></div>
<div class="abs" style="left:980px;top:128px;width:0;height:0;border-left:3.5px solid transparent;border-right:3.5px solid transparent;border-bottom:3.5px solid #a3a3a3"></div>

</body></html>
